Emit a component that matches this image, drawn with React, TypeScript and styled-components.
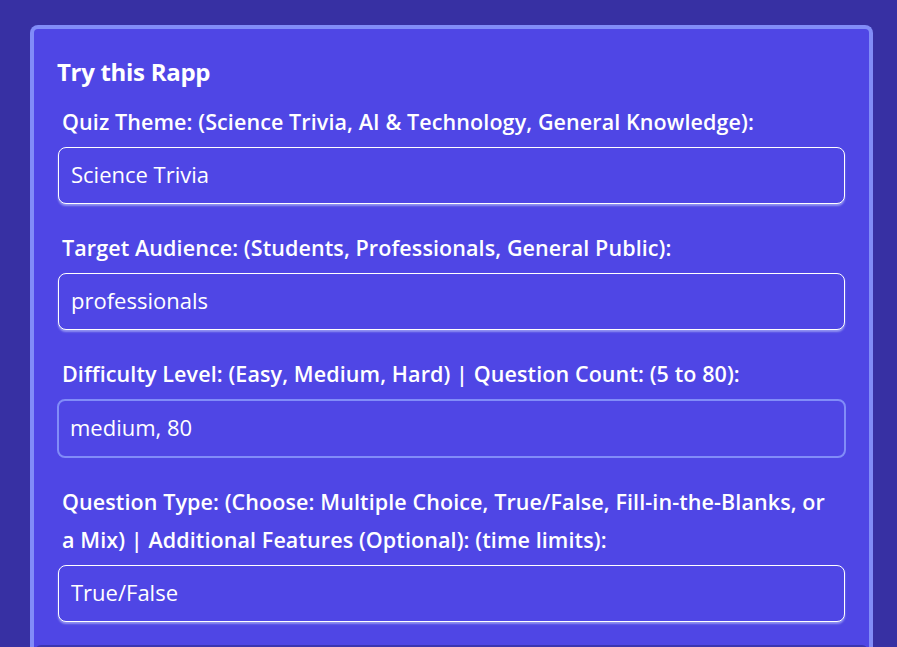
import React from "react";
import styled, { createGlobalStyle } from "styled-components";

const Global = createGlobalStyle`
  html, body {
    margin: 0;
    padding: 0;
    background: #3730a3;
    overflow: hidden;
  }
  body {
    font-family: "Open Sans", Lato, sans-serif;
    color: #ffffff;
  }
`;

const Page = styled.div`
  height: 647px;
  padding: 25px 24px 0 30px;
  box-sizing: border-box;
`;

const Card = styled.section`
  background: #4f46e5;
  border: 4px solid #818cf8;
  border-bottom: none;
  border-radius: 8px 8px 0 0;
  padding: 26px 24px 0 24px;
  height: 640px;
  box-sizing: border-box;
  display: flex;
  flex-direction: column;
`;

const Title = styled.h2`
  margin: 0 0 15px -1px;
  font-size: 24px;
  line-height: 33px;
  font-weight: 700;
  letter-spacing: -0.3px;
  color: #ffffff;
`;

const Field = styled.div`
  display: flex;
  flex-direction: column;
  margin-bottom: 25px;
`;

const Label = styled.label`
  padding: 0 10px 0 4px;
  font-size: 21.5px;
  line-height: 38px;
  font-weight: 600;
  letter-spacing: 0.1px;
  color: #ffffff;
  margin-bottom: 6px;
`;

const Input = styled.input<{ $focused?: boolean }>`
  box-sizing: border-box;
  height: ${(p) => (p.$focused ? "59px" : "57px")};
  margin: 0 ${(p) => (p.$focused ? "-1px" : "0")};
  padding: 0 ${(p) => (p.$focused ? "11px" : "12px")} 3px;
  border: ${(p) => (p.$focused ? "2px solid #818cf8" : "1px solid #ffffff")};
  border-radius: 8px;
  background: #4f46e5;
  color: #ffffff;
  font-family: "Open Sans", Lato, sans-serif;
  font-size: 22px;
  font-weight: 400;
  letter-spacing: 0;
  outline: none;
  box-shadow: ${(p) =>
    p.$focused ? "none" : "0 2px 2px rgba(199, 210, 254, 0.55)"};
`;

const Footer = styled.div`
  margin: -2px -23px 0;
  height: 20px;
  background: #3b35b0;
  border-radius: 6px 6px 0 0;
`;

const fields = [
  {
    label:
      "Quiz Theme: (Science Trivia, AI & Technology, General Knowledge):",
    value: "Science Trivia",
  },
  {
    label: "Target Audience: (Students, Professionals, General Public):",
    value: "professionals",
  },
  {
    label:
      "Difficulty Level: (Easy, Medium, Hard) | Question Count: (5 to 80):",
    value: "medium, 80",
    focused: true,
  },
  {
    label:
      "Question Type: (Choose: Multiple Choice, True/False, Fill-in-the-Blanks, or a Mix) | Additional Features (Optional): (time limits):",
    value: "True/False",
  },
];

export default function App() {
  return (
    <>
      <Global />
      <Page>
        <Card>
          <Title>Try this Rapp</Title>
          {fields.map((f, i) => (
            <Field key={i}>
              <Label htmlFor={`f${i}`}>{f.label}</Label>
              <Input
                id={`f${i}`}
                defaultValue={f.value}
                readOnly
                $focused={f.focused}
              />
            </Field>
          ))}
          <Footer />
        </Card>
      </Page>
    </>
  );
}
